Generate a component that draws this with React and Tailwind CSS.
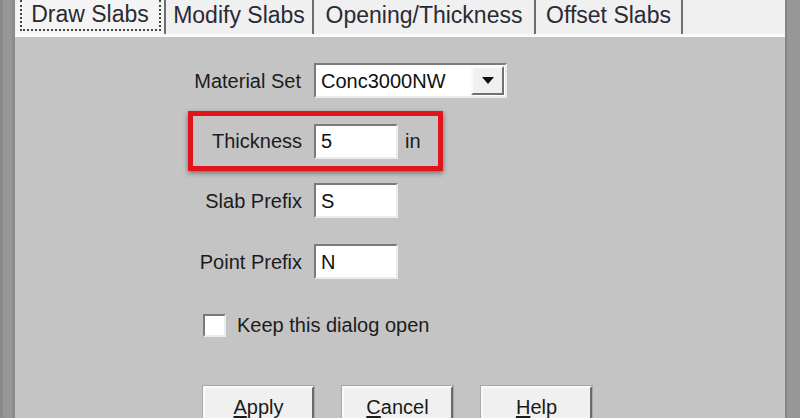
import React from 'react'

const font = "font-['Liberation_Sans',Arial,sans-serif]"

const tabs = [
  { label: 'Draw Slabs', w: 'w-[150px]', active: true },
  { label: 'Modify Slabs', w: 'w-[148px]' },
  { label: 'Opening/Thickness', w: 'w-[222px]' },
  { label: 'Offset Slabs', w: 'w-[147px]' },
]

function Sunken({ className = '', children }) {
  return (
    <div
      className={`bg-white border-2 border-t-[#7a7a7a] border-l-[#7a7a7a] border-b-[#ececec] border-r-[#ececec] ${className}`}
    >
      {children}
    </div>
  )
}

function Field({ label, value }) {
  return (
    <div className="flex items-center">
      <div className="w-[299px] pr-[12px] text-right text-[20px] text-[#1c1c1c] whitespace-nowrap">{label}</div>
      <Sunken className="w-[84px] h-[35px] flex items-center pl-[5px] text-[20px] text-[#111]">
        {value}
      </Sunken>
    </div>
  )
}

function Button({ first, rest }) {
  return (
    <button className="w-[111px] h-[42px] shrink-0 bg-[#f0f0f0] border-2 border-t-[#fafafa] border-l-[#fafafa] border-b-[#6a6a6a] border-r-[#6a6a6a] outline outline-1 outline-[#a8a8a8] flex items-start justify-center pt-[4px] text-[20px] text-[#1a1a1a]">
      <span>
        <span className="underline underline-offset-[2px]">{first}</span>
        {rest}
      </span>
    </button>
  )
}

export default function App() {
  return (
    <div className={`w-[800px] h-[418px] overflow-hidden flex ${font}`}>
      <div className="w-[15px] h-full bg-[#979797] border-l-[3px] border-l-[#8a8a8a] border-r-[3px] border-r-[#8c8c8c]" />

      <div className="flex-1 flex flex-col bg-[#c4c4c4] min-h-0">
        {/* tab strip */}
        <div className="h-[34px] shrink-0 bg-[#f0f0f0] flex items-stretch pl-[1px]">
          {tabs.map((t) => (
            <div
              key={t.label}
              className={`${t.w} shrink-0 flex items-center justify-center border-r-2 border-r-[#6e6e6e] text-[23px] text-[#2a2a36] whitespace-nowrap ${
                t.active ? 'bg-[#f4f4f4]' : ''
              }`}
            >
              {t.active ? (
                <span className="border-2 border-dotted border-[#444] border-t-0 h-[31px] w-[141px] flex items-center justify-center mt-[-3px] pb-[1px]">
                  {t.label}
                </span>
              ) : (
                <span className="mt-[-4px]">{t.label}</span>
              )}
            </div>
          ))}
        </div>
        <div className="h-[3px] shrink-0 bg-[#fbfbfb]" />

        {/* panel */}
        <div className="flex flex-col pt-[26px] shrink-0">
          <div className="flex items-center">
            <div className="w-[299px] pr-[13px] text-right text-[20px] text-[#1c1c1c]">Material Set</div>
            <Sunken className="w-[193px] h-[35px] flex items-center justify-between pl-[5px] pr-[1px] text-[20px] text-[#111]">
              <span>Conc3000NW</span>
              <div className="w-[33px] h-[29px] bg-[#f0f0f0] border-2 border-t-[#fafafa] border-l-[#fafafa] border-b-[#707070] border-r-[#707070] flex items-center justify-center">
                <svg width="12" height="7" viewBox="0 0 12 7">
                  <path d="M0 0 H12 L6 7 Z" fill="#111" />
                </svg>
              </div>
            </Sunken>
          </div>

          <div className="mt-[13px] ml-[173px] w-[255px] h-[60px] border-[5px] border-[#e0141a] shadow-[0_2px_5px_rgba(0,0,0,0.45)] flex items-center">
            <div className="w-[121px] pr-[12px] text-right text-[20px] text-[#1c1c1c]">Thickness</div>
            <Sunken className="w-[84px] h-[35px] flex items-center pl-[5px] text-[20px] text-[#111]">5</Sunken>
            <span className="ml-[7px] text-[20px] text-[#1c1c1c]">in</span>
          </div>

          <div className="mt-[12px]">
            <Field label="Slab Prefix" value="S" />
          </div>
          <div className="mt-[26px]">
            <Field label="Point Prefix" value="N" />
          </div>

          <div className="mt-[31px] ml-[188px] flex items-center">
            <Sunken className="w-[23px] h-[23px]" />
            <span className="ml-[11px] text-[20px] text-[#1c1c1c]">Keep this dialog open</span>
          </div>

          <div className="mt-[46px] ml-[188px] flex gap-[28px]">
            <Button first="A" rest="pply" />
            <Button first="C" rest="ancel" />
            <Button first="H" rest="elp" />
          </div>
        </div>
      </div>

      <div className="w-[15px] h-full bg-[#979797] border-l-2 border-l-[#858585]" />
    </div>
  )
}
